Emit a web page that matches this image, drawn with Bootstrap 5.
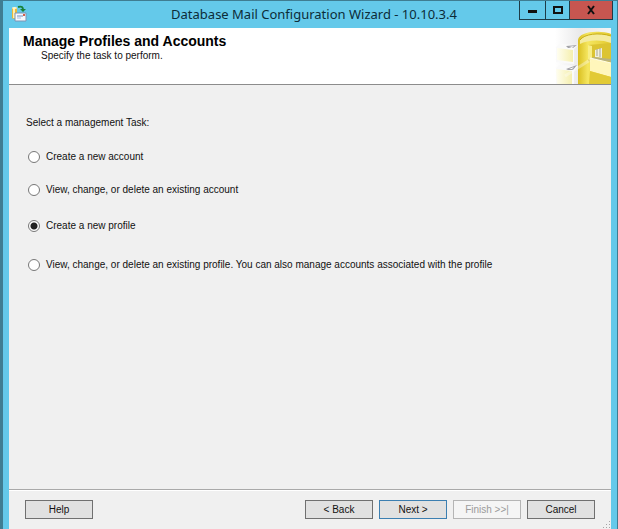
<!DOCTYPE html>
<html lang="en">
<head>
<meta charset="utf-8">
<meta name="viewport" content="width=device-width, initial-scale=1">
<title>Database Mail Configuration Wizard</title>
<link href="https://cdn.jsdelivr.net/npm/bootstrap@5.3.0/dist/css/bootstrap.min.css" rel="stylesheet">
<style>
  body { font: 10px/16px "Liberation Sans", Arial, sans-serif; color: #111; background: #64c9ea; }
  .wizard { border: solid #3f7d92; border-width: 1px 1px 0 3px; background: #64c9ea; }
  .titlebar { height: 27px; padding-left: 8px; }
  .titlebar h1 { font: 13px/26px "Noto Sans", "Segoe UI", sans-serif; color: #0c2c38; }
  .title-side { flex: 1 1 0; }
  .app-icon { width: 17px; height: 17px; }
  .caption-btns { margin-right: 4px; border: 1px solid #1d3c48; border-top: 0; height: 19px; }
  .caption-btns button { width: 26px; border: 0; border-right: 1px solid #1d3c48; background: #64c9ea; padding: 0; display: flex; align-items: center; justify-content: center; }
  .caption-btns .btn-max { width: 24px; }
  .caption-btns .btn-x { width: 42px; border-right: 0; background: #c75650; }
  .client { margin: 0 6px; background: #f0f0f0; }
  .banner { height: 57px; background: #fff; border-bottom: 1px solid #8c8c8c; }
  .banner-text { padding: 6px 0 0 14px; }
  .banner h2 { font-size: 14px; line-height: 15px; font-weight: bold; color: #000; }
  .banner p { padding-left: 18px; line-height: 14px; }
  .banner-art { width: 56px; height: 56px; }
  .tasks { padding: 30px 17px; }
  .tasks legend { font-size: 10px; line-height: 16px; margin-bottom: 10px; }
  .options { display: grid; grid-template-rows: 32px 34px 38px 40px; padding-left: 2px; }
  .option-row { gap: 6px; }
  .options .form-check-input { width: 12px; height: 12px; margin: 0; border: 1px solid #777; box-shadow: none; float: none; flex: none; }
  .options .form-check-input:checked { background-color: #fff; background-image: radial-gradient(circle, #222 0 3px, transparent 4px); }
  .actions { gap: 6px; border-top: 1px solid #a9a9a9; box-shadow: inset 0 1px #fff; padding: 10px 16px; }
  .actions .btn { --bs-btn-font-size: 10px; --bs-btn-line-height: 17px; --bs-btn-padding-y: 0; --bs-btn-padding-x: 0; --bs-btn-border-radius: 0; --bs-btn-bg: #e1e1e1; --bs-btn-color: #111; --bs-btn-border-color: #707070; --bs-btn-disabled-bg: #f5f5f5; --bs-btn-disabled-color: #9b9b9b; --bs-btn-disabled-border-color: #b5b5b5; --bs-btn-disabled-opacity: 1; width: 68px; }
  .actions .btn-default { --bs-btn-border-color: #3c7fb1; }
  .grip { width: 8px; height: 8px; }
</style>
<script src="https://cdn.jsdelivr.net/npm/bootstrap@5.3.0/dist/js/bootstrap.bundle.min.js"></script>
</head>
<body>
<main class="wizard d-flex flex-column vh-100">
  <header class="titlebar d-flex align-items-start">
    <div class="title-side d-flex">
      <svg class="app-icon mt-1" viewBox="0 0 17 17" aria-hidden="true">
        <path d="M1 3v10c0 1 5 1 5 0V3z" fill="#e9b93c"/><path d="M2 3v10h2V3z" fill="#fff0b0"/><ellipse cx="3.500" cy="3" rx="2.500" ry="1" fill="#fff6cc"/>
        <path d="M7 2c4-1 5 0 5 3" fill="none" stroke="#188239" stroke-width="2"/><path d="M9 4h6l-3 3z" fill="#188239"/>
        <path d="M4 8h11v8H4z" fill="#f7f9fd" stroke="#7c93b3"/><path d="M6 11h6" stroke="#6b8fc0"/><path d="M6 13h4" stroke="#a9bfdd"/><path d="M12 9h2v2h-2z" fill="#d4604c"/>
      </svg>
    </div>
    <h1 class="m-0 text-nowrap">Database Mail Configuration Wizard - 10.10.3.4</h1>
    <div class="title-side d-flex justify-content-end">
      <div class="caption-btns d-flex">
        <button type="button" aria-label="Minimize"><svg width="10" height="10"><path d="M0 5h9v3H0z" fill="#111"/></svg></button>
        <button type="button" class="btn-max" aria-label="Maximize"><svg width="10" height="10"><path d="M1 2h8v6H1z" fill="none" stroke="#111" stroke-width="2"/></svg></button>
        <button type="button" class="btn-x" aria-label="Close"><svg width="10" height="10"><path d="M2 1l6 8M8 1l-6 8" stroke="#111" stroke-width="2"/></svg></button>
      </div>
    </div>
  </header>
  <div class="client flex-fill d-flex flex-column">
    <div class="banner d-flex justify-content-between">
      <div class="banner-text"><h2 class="m-0">Manage Profiles and Accounts</h2><p class="m-0">Specify the task to perform.</p></div>
      <svg class="banner-art" viewBox="0 0 56 56" aria-hidden="true">
        <defs>
          <linearGradient id="fade"><stop offset="0" stop-color="#fff"/><stop offset=".45" stop-color="#e9e9ea"/><stop offset="1" stop-color="#f4f4f4"/></linearGradient>
          <linearGradient id="gold"><stop offset="0" stop-color="#d9bf20"/><stop offset=".3" stop-color="#f5e660"/><stop offset="1" stop-color="#e2c92e"/></linearGradient>
          <linearGradient id="pale"><stop offset="0" stop-color="#fffef0"/><stop offset="1" stop-color="#f5efae"/></linearGradient>
        </defs>
        <path d="M0 0h56v56H0z" fill="url(#fade)"/>
        <path d="M1 19l3-3 19 1-4 4v15L1 34z" fill="#fafafa"/><path d="M2 20l16 2v12L2 32z" fill="url(#pale)"/><path d="M11 18l11-1-4 3-5 0z" fill="#a3a3a8"/><path d="M14 19l5-1-2 2z" fill="#fff"/>
        <path d="M1 40l3-3 19 1-4 5v13H1z" fill="#fafafa"/><path d="M1 41l16 2v13H2z" fill="url(#pale)"/><path d="M11 41l11-4-4 5-5 0z" fill="#a3a3a8"/><path d="M14 41l5-2-2 2z" fill="#fff"/>
        <path d="M23 56V12C24 6 34 3 46 4c5 0 8 1 10 2v50z" fill="url(#gold)"/>
        <path d="M25 12C29 6 44 4 56 8v7c-10-4-24-3-31 1z" fill="#f4eba0"/><path d="M25 12C29 6 44 4 56 8" fill="none" stroke="#c8ae16"/>
        <path d="M33 17l23-2v27l-23-9z" fill="#dcc432"/><path d="M33 17l4 1v15l-4-2z" fill="#f8ee86"/>
        <path d="M40 22l7-2v10l-7-1z" fill="#f2f0df"/><path d="M42 21v7M45 20v9" stroke="#a8a793"/><path d="M38 29l18 2v3l-20-3z" fill="#b9b37f"/>
        <path d="M35 30l21 5v14l-21-6z" fill="#fff6bb"/><path d="M35 30l21 5" stroke="#fffde8"/><path d="M35 43l21 6v7H34z" fill="#e2ca35"/>
        <path d="M10 48l25-16" stroke="#fff" stroke-width="3" opacity=".35"/>
      </svg>
    </div>
    <form class="flex-fill d-flex flex-column">
      <fieldset class="tasks flex-fill">
        <legend>Select a management Task:</legend>
        <div class="options">
          <div class="option-row d-flex align-items-center"><input class="form-check-input" type="radio" name="task" id="t1"><label for="t1">Create a new account</label></div>
          <div class="option-row d-flex align-items-center"><input class="form-check-input" type="radio" name="task" id="t2"><label for="t2">View, change, or delete an existing account</label></div>
          <div class="option-row d-flex align-items-center"><input class="form-check-input" type="radio" name="task" id="t3" checked><label for="t3">Create a new profile</label></div>
          <div class="option-row d-flex align-items-center"><input class="form-check-input" type="radio" name="task" id="t4"><label for="t4">View, change, or delete an existing profile. You can also manage accounts associated with the profile</label></div>
        </div>
      </fieldset>
      <div class="actions d-flex position-relative">
        <button type="button" class="btn me-auto">Help</button>
        <button type="button" class="btn">&lt; Back</button>
        <button type="button" class="btn btn-default">Next &gt;</button>
        <button type="button" class="btn" disabled>Finish &gt;&gt;|</button>
        <button type="button" class="btn">Cancel</button>
        <svg class="grip position-absolute bottom-0 end-0" viewBox="0 0 8 8" aria-hidden="true"><path d="M6 0h1v1H6zM3 3h1v1H3zM6 3h1v1H6zM0 6h1v1H0zM3 6h1v1H3zM6 6h1v1H6z" fill="#a5a5a5"/></svg>
      </div>
    </form>
  </div>
</main>
</body>
</html>
